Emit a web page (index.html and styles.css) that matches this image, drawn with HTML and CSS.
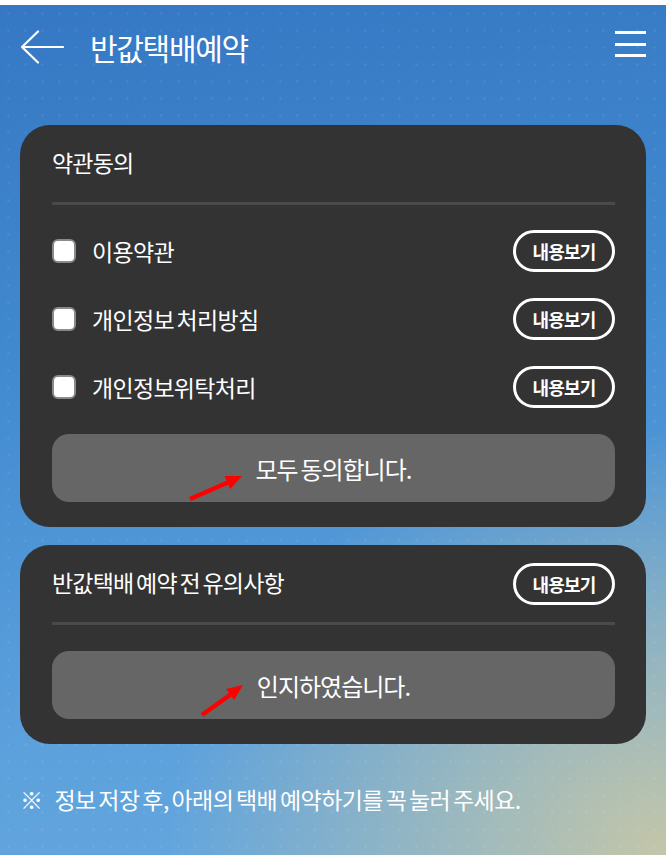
FILE: index.html
```html
<!DOCTYPE html>
<html lang="ko">
<head>
<meta charset="utf-8">
<title>반값택배예약</title>
<link rel="stylesheet" href="styles.css">
</head>
<body>
<div class="screen">
  <header class="header">
    <div class="header-left">
      <svg class="back" width="44" height="34" viewBox="0 0 44 34" aria-hidden="true">
        <path d="M43 17H2M18 1.5L2 17l16 15.5" fill="none" stroke="#fff" stroke-width="2.2" stroke-linecap="round" stroke-linejoin="round"/>
      </svg>
      <h1 class="title">반값택배예약</h1>
    </div>
    <div class="menu" aria-label="메뉴">
      <span></span><span></span><span></span>
    </div>
  </header>

  <section class="card">
    <div class="card-head">
      <h2 class="card-title">약관동의</h2>
    </div>
    <div class="divider"></div>
    <ul class="terms">
      <li class="term">
        <label class="term-label"><span class="check"></span>이용약관</label>
        <button class="view-btn">내용보기</button>
      </li>
      <li class="term">
        <label class="term-label"><span class="check"></span>개인정보 처리방침</label>
        <button class="view-btn">내용보기</button>
      </li>
      <li class="term">
        <label class="term-label"><span class="check"></span>개인정보위탁처리</label>
        <button class="view-btn">내용보기</button>
      </li>
    </ul>
    <button class="big-btn big-btn-first">모두 동의합니다.
      <svg class="arrow" width="562" height="68" aria-hidden="true">
        <line x1="138" y1="65" x2="177" y2="48" stroke="#ff0000" stroke-width="4.5"/>
        <polygon points="190,42 178.2,54.9 172.6,42.1" fill="#ff0000"/>
      </svg>
    </button>
  </section>

  <section class="card card-second">
    <div class="card-head">
      <h2 class="card-title">반값택배 예약 전 유의사항</h2>
      <button class="view-btn">내용보기</button>
    </div>
    <div class="divider"></div>
    <button class="big-btn big-btn-second">인지하였습니다.
      <svg class="arrow" width="562" height="68" aria-hidden="true">
        <line x1="150" y1="64" x2="180" y2="42.5" stroke="#ff0000" stroke-width="4.5"/>
        <polygon points="191,34 182.2,49.1 174,37.9" fill="#ff0000"/>
      </svg>
    </button>
  </section>

  <p class="notice"><span class="notice-mark">※</span>정보 저장 후, 아래의 택배 예약하기를 꼭 눌러 주세요.</p>
</div>
</body>
</html>
```
FILE: styles.css
```css
* { box-sizing: border-box; }

html, body {
  margin: 0;
  padding: 0;
  background: #ffffff;
}

body {
  font-family: "Noto Sans CJK KR", "Noto Sans", sans-serif;
  color: #ffffff;
  word-spacing: -3px;
}

.screen {
  margin-top: 5px;
  height: 850px;
  padding: 0 20px 0 20px;
  overflow: hidden;
  background:
    radial-gradient(circle, rgba(255,255,255,0.07) 1px, transparent 1.6px) 0 0 / 17px 17px,
    radial-gradient(ellipse 75% 50% at 100% 100%, rgba(196,198,168,1) 0%, rgba(196,198,168,0) 100%),
    linear-gradient(172deg, #3577c3 0%, #428bd0 40%, #5a9fdc 75%, #66a8de 100%);
}

.header {
  height: 84px;
  display: flex;
  align-items: center;
  justify-content: space-between;
}

.header-left {
  display: flex;
  align-items: center;
  gap: 26px;
}

.back { display: block; }

.title {
  margin: 0;
  font-size: 30px;
  font-weight: 400;
  letter-spacing: -1.3px;
  line-height: 1;
}

.menu {
  width: 31px;
  display: flex;
  flex-direction: column;
  gap: 8.5px;
  margin-top: -6px;
}

.menu span {
  display: block;
  height: 3px;
  background: #ffffff;
}

.card {
  margin-top: 36px;
  background: #333333;
  border-radius: 30px;
  padding: 18px 31px 25px 32px;
}

.card-second { margin-top: 18px; }

.card-head {
  height: 42px;
  display: flex;
  align-items: center;
  justify-content: space-between;
}

.card-title {
  margin: 0;
  font-size: 23px;
  font-weight: 400;
  letter-spacing: -0.8px;
  line-height: 1;
  margin-top: -4px;
}

.divider {
  height: 3px;
  background: #4a4a4a;
  margin-top: 17px;
}

.terms {
  list-style: none;
  margin: 12px 0 0 0;
  padding: 0;
}

.term {
  height: 68px;
  display: flex;
  align-items: center;
  justify-content: space-between;
}

.term-label {
  display: flex;
  align-items: center;
  gap: 16px;
  font-size: 23px;
  letter-spacing: -0.7px;
  line-height: 1;
}

.check {
  width: 24px;
  height: 24px;
  background: #ffffff;
  border: 2px solid #8a8a8a;
  border-radius: 6px;
  flex: none;
}

.view-btn {
  width: 102px;
  height: 42px;
  border: 3px solid #ffffff;
  border-radius: 21px;
  background: transparent;
  color: #ffffff;
  font-family: inherit;
  font-size: 18px;
  font-weight: 700;
  letter-spacing: -0.8px;
  padding: 0;
  line-height: 1;
}

.big-btn {
  position: relative;
  display: flex;
  align-items: center;
  justify-content: center;
  width: 100%;
  height: 68px;
  border: none;
  border-radius: 17px;
  background: #666666;
  color: #ffffff;
  font-family: inherit;
  font-size: 24px;
  letter-spacing: -1px;
  word-spacing: -3px;
  padding: 0 0 0 0;
}

.big-btn-first { margin-top: 13px; }
.big-btn-second { margin-top: 26px; }

.arrow {
  position: absolute;
  left: 0;
  top: 0;
  overflow: visible;
}

.notice {
  margin: 40px 0 0 0;
  font-size: 23px;
  letter-spacing: -0.6px;
  line-height: 30px;
}

.notice-mark {
  display: inline-block;
  margin-right: 12px;
}
```
